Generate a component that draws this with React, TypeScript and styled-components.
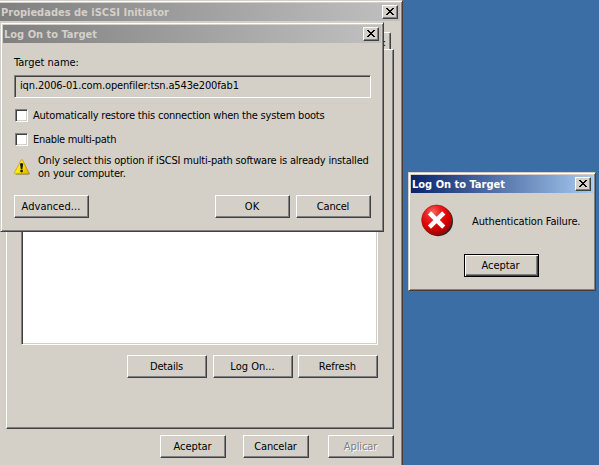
import React from "react";
import styled, { createGlobalStyle, css } from "styled-components";

const face = "#d4d0c8";
const shadow = "#808080";
const dark = "#404040";

const GlobalStyle = createGlobalStyle`
  *, *::before, *::after { box-sizing: border-box; }
  html, body { margin: 0; padding: 0; overflow: hidden; }
  body {
    font-family: "DejaVu Sans Condensed", "DejaVu Sans", sans-serif;
    font-stretch: condensed;
    font-size: 11px;
    line-height: 13px;
    color: #000;
  }
`;

const raised = css`
  border: 1px solid;
  border-color: #fff ${dark} ${dark} #fff;
  box-shadow: inset -1px -1px 0 ${shadow};
`;

const sunken = css`
  border: 1px solid;
  border-color: ${shadow} #fff #fff ${shadow};
  box-shadow: inset 1px 1px 0 ${dark}, inset -1px -1px 0 ${face};
`;

const Desktop = styled.main`
  position: relative;
  width: 599px;
  height: 465px;
  overflow: hidden;
  background: #3a6ea5;
`;

const Window = styled.section<{ $x: number; $y: number; $w: number; $h: number }>`
  position: absolute;
  left: ${(p) => p.$x}px;
  top: ${(p) => p.$y}px;
  width: ${(p) => p.$w}px;
  height: ${(p) => p.$h}px;
  display: flex;
  flex-direction: column;
  padding: 2px;
  background: ${face};
  border: 1px solid;
  border-color: ${face} ${dark} ${dark} ${face};
  box-shadow: inset 1px 1px 0 #fff, inset -1px -1px 0 ${shadow};
`;

const TitleBar = styled.header<{ $active?: boolean }>`
  flex: none;
  display: flex;
  align-items: center;
  justify-content: space-between;
  height: 18px;
  padding: 0 2px 0 1px;
  background: ${(p) =>
    p.$active
      ? "linear-gradient(90deg, #0a246a, #a6caf0)"
      : "linear-gradient(90deg, #808080, #c0c0c0)"};
  color: ${(p) => (p.$active ? "#fff" : face)};
  font-weight: bold;
  white-space: nowrap;
`;

const CloseButton = styled.button`
  display: flex;
  width: 16px;
  height: 14px;
  padding: 2px 0 0 3px;
  background: ${face};
  ${raised}
`;

const Button = styled.button<{ $w: number; $spacing?: number; $default?: boolean }>`
  flex: none;
  width: ${(p) => p.$w}px;
  height: 23px;
  padding: 0 1px 1px 0;
  background: ${face};
  color: #000;
  font: inherit;
  line-height: 13px;
  letter-spacing: ${(p) => p.$spacing ?? 0}px;
  white-space: nowrap;
  ${raised}
  ${(p) =>
    p.$default &&
    css`
      border-color: #000;
      box-shadow: inset 1px 1px 0 #fff, inset -1px -1px 0 ${dark}, inset -2px -2px 0 ${shadow};
    `}
  &:disabled {
    color: ${shadow};
    text-shadow: 1px 1px 0 #fff;
  }
`;

const Text = styled.span<{ $spacing?: number }>`
  letter-spacing: ${(p) => p.$spacing ?? 0}px;
  white-space: nowrap;
`;

/* Property sheet */
const Sheet = styled.div`
  display: flex;
  flex-direction: column;
  padding: 11px 6px 0;
`;

const Tab = styled.div`
  align-self: flex-end;
  width: 60px;
  height: 17px;
  margin-right: 3px;
  padding: 3px 4px 0 0;
  text-align: right;
  border: solid;
  border-width: 1px 1px 0 1px;
  border-color: #fff ${dark} #fff #fff;
  border-radius: 2px 2px 0 0;
  box-shadow: inset -1px 0 0 ${shadow};
`;

const TabPane = styled.div`
  display: flex;
  flex-direction: column;
  width: 388px;
  height: 380px;
  padding: 99px 15px 0 14px;
  ${raised}
`;

const TargetList = styled.div`
  flex: none;
  height: 196px;
  background: #fff;
  ${sunken}
`;

const PaneActions = styled.div`
  display: flex;
  justify-content: flex-end;
  padding-top: 10px;
  gap: 5px;
  & > :nth-child(1) { margin-right: 1px; }
`;

const SheetActions = styled.footer`
  display: flex;
  justify-content: flex-end;
  gap: 17px;
  padding-top: 6px;
  & > :last-child { margin-left: 2px; }
`;

/* Log-on dialog */
const LogOnBody = styled.div`
  display: flex;
  flex-direction: column;
  padding: 13px 10px 0 11px;
`;

const TargetField = styled.div`
  height: 23px;
  margin-top: 6px;
  padding: 3px 0 0 5px;
  ${sunken}
`;

const CheckRow = styled.label`
  display: flex;
  align-items: center;
  height: 13px;
  margin: 11px 0 0 1px;
  gap: 5px;
`;

const CheckBox = styled.span`
  width: 13px;
  height: 13px;
  background: #fff;
  ${sunken}
`;

const Notice = styled.div`
  display: flex;
  margin-top: 8px;
  gap: 8px;
  svg { margin-top: 5px; }
`;

const NoticeText = styled.p`
  display: flex;
  flex-direction: column;
  margin: 0;
`;

const LogOnActions = styled.footer`
  display: flex;
  gap: 6px;
  margin-top: 15px;
  & > :first-child { margin-right: auto; }
`;

/* Message box */
const MessageBody = styled.div`
  display: flex;
  align-items: center;
  gap: 17px;
  padding: 11px 0 0 10px;
`;

const MessageActions = styled.footer`
  display: flex;
  justify-content: center;
  padding: 16px 2px 0 0;
`;

const CloseGlyph = () => (
  <svg width="8" height="7" viewBox="0 0 8 7" shapeRendering="crispEdges">
    <path d="M0 0h2v1h-2zM6 0h2v1h-2zM1 1h2v1h-2zM5 1h2v1h-2zM2 2h4v1h-4zM3 3h2v1h-2zM2 4h4v1h-4zM1 5h2v1h-2zM5 5h2v1h-2zM0 6h2v1h-2zM6 6h2v1h-2z" />
  </svg>
);

const WarningIcon = () => (
  <svg width="16" height="16" viewBox="0 0 16 16">
    <defs>
      <linearGradient id="warn" x1="0" x2="1" y1="0" y2="0.6">
        <stop offset="0" stopColor="#fff45c" />
        <stop offset="0.5" stopColor="#ffee00" />
        <stop offset="1" stopColor="#e8bc00" />
      </linearGradient>
    </defs>
    <path d="M8.5 1.2L15.5 14.2Q15.6 15.6 14.3 15.6H2z" fill="#77714f" />
    <path d="M7.3.8Q7.8.2 8.4.8L14.6 13.3Q14.9 14.8 13.6 14.8H1.5Q.2 14.8.5 13.6z" fill="url(#warn)" stroke="#c49c10" strokeWidth=".8" />
    <path d="M6 4.8Q7.6 3.4 9.2 4.8L8.4 10H6.8z" fill="#171717" />
    <circle cx="7.6" cy="12" r="1.4" fill="#171717" />
  </svg>
);

const ErrorIcon = () => (
  <svg width="34" height="34" viewBox="0 0 34 34">
    <defs>
      <radialGradient id="err" cx="0.38" cy="0.24" r="0.8">
        <stop offset="0" stopColor="#f46a60" />
        <stop offset="0.3" stopColor="#ea2424" />
        <stop offset="0.65" stopColor="#d90000" />
        <stop offset="1" stopColor="#980000" />
      </radialGradient>
      <filter id="soft" x="-20%" y="-20%" width="140%" height="140%">
        <feGaussianBlur stdDeviation="0.6" />
      </filter>
    </defs>
    <circle cx="17" cy="17.2" r="15" fill="#29201e" filter="url(#soft)" />
    <circle cx="15.6" cy="16" r="15" fill="url(#err)" stroke="#a31212" strokeWidth=".6" />
    <path d="M10 10.4L21.2 21.6M21.2 10.4L10 21.6" stroke="#fff" strokeWidth="4.5" strokeLinecap="square" strokeLinejoin="round" />
  </svg>
);

const Close = () => (
  <CloseButton aria-label="Close">
    <CloseGlyph />
  </CloseButton>
);

export default function App() {
  return (
    <Desktop>
      <GlobalStyle />
      <Window $x={-3} $y={0} $w={406} $h={480}>
        <TitleBar>
          <Text>Propiedades de iSCSI Initiator</Text>
          <Close />
        </TitleBar>
        <Sheet>
          <Tab>:</Tab>
          <TabPane>
            <TargetList />
            <PaneActions>
              <Button $w={80} $spacing={-0.2}>Details</Button>
              <Button $w={80}>Log On...</Button>
              <Button $w={80}>Refresh</Button>
            </PaneActions>
          </TabPane>
          <SheetActions>
            <Button $w={66} $spacing={-0.07}>Aceptar</Button>
            <Button $w={66} $spacing={-0.13}>Cancelar</Button>
            <Button $w={66} $spacing={-0.1} disabled>Aplicar</Button>
          </SheetActions>
        </Sheet>
      </Window>

      <Window $x={0} $y={22} $w={384} $h={210}>
        <TitleBar>
          <Text>Log On to Target</Text>
          <Close />
        </TitleBar>
        <LogOnBody>
          <Text>Target name:</Text>
          <TargetField>
            <Text $spacing={-0.14}>iqn.2006-01.com.openfiler:tsn.a543e200fab1</Text>
          </TargetField>
          <CheckRow>
            <CheckBox />
            <Text $spacing={-0.21}>Automatically restore this connection when the system boots</Text>
          </CheckRow>
          <CheckRow>
            <CheckBox />
            <Text $spacing={-0.3}>Enable multi-path</Text>
          </CheckRow>
          <Notice>
            <WarningIcon />
            <NoticeText>
              <Text $spacing={-0.195}>Only select this option if iSCSI multi-path software is already installed</Text>
              <Text $spacing={-0.18}>on your computer.</Text>
            </NoticeText>
          </Notice>
          <LogOnActions>
            <Button $w={75} $spacing={0.06}>Advanced...</Button>
            <Button $w={75}>OK</Button>
            <Button $w={75} $spacing={-0.2}>Cancel</Button>
          </LogOnActions>
        </LogOnBody>
      </Window>

      <Window $x={408} $y={172} $w={188} $h={119}>
        <TitleBar $active>
          <Text>Log On to Target</Text>
          <Close />
        </TitleBar>
        <MessageBody>
          <ErrorIcon />
          <Text $spacing={-0.13}>Authentication Failure.</Text>
        </MessageBody>
        <MessageActions>
          <Button $w={75} $spacing={-0.07} $default>Aceptar</Button>
        </MessageActions>
      </Window>
    </Desktop>
  );
}
